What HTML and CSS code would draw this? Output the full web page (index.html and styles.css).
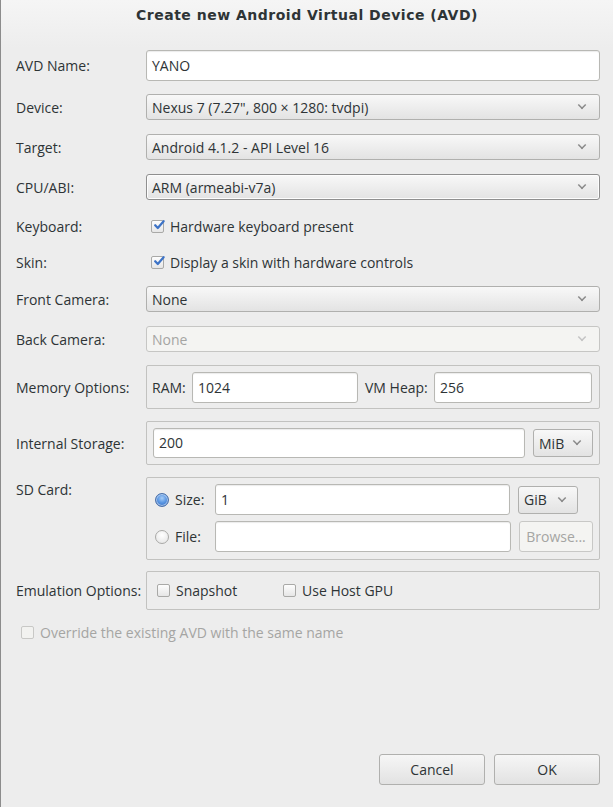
FILE: index.html
```html
<!DOCTYPE html>
<html>
<head>
<meta charset="utf-8">
<link rel="stylesheet" href="styles.css">
</head>
<body>
<div class="dialog">
  <div class="title">Create new Android Virtual Device (AVD)</div>
  <div class="form">
    <div class="row r-name">
      <div class="label">AVD Name:</div>
      <div class="entry grow">YANO</div>
    </div>
    <div class="row r-sel first-sel">
      <div class="label">Device:</div>
      <div class="select grow"><span>Nexus 7 (7.27", 800 × 1280: tvdpi)</span><i class="chev"></i></div>
    </div>
    <div class="row r-sel">
      <div class="label">Target:</div>
      <div class="select grow"><span>Android 4.1.2 - API Level 16</span><i class="chev"></i></div>
    </div>
    <div class="row r-sel">
      <div class="label">CPU/ABI:</div>
      <div class="select grow focus"><span>ARM (armeabi-v7a)</span><i class="chev"></i></div>
    </div>
    <div class="row r-check">
      <div class="label">Keyboard:</div>
      <div class="check-item"><i class="cb checked"><svg viewBox="0 0 12 12" width="12" height="12"><path d="M2.2 6.2 L4.8 9 L10.6 2.2" fill="none" stroke="#3d73c6" stroke-width="2.2" stroke-linecap="round" stroke-linejoin="round"/></svg></i>Hardware keyboard present</div>
    </div>
    <div class="row r-check">
      <div class="label">Skin:</div>
      <div class="check-item"><i class="cb checked"><svg viewBox="0 0 12 12" width="12" height="12"><path d="M2.2 6.2 L4.8 9 L10.6 2.2" fill="none" stroke="#3d73c6" stroke-width="2.2" stroke-linecap="round" stroke-linejoin="round"/></svg></i>Display a skin with hardware controls</div>
    </div>
    <div class="row r-sel front">
      <div class="label">Front Camera:</div>
      <div class="select grow"><span>None</span><i class="chev"></i></div>
    </div>
    <div class="row r-sel">
      <div class="label">Back Camera:</div>
      <div class="select grow disabled"><span>None</span><i class="chev"></i></div>
    </div>
    <div class="row r-mem">
      <div class="label">Memory Options:</div>
      <div class="group grow mem">
        <span class="inlabel ramlabel">RAM:</span>
        <div class="entry ram">1024</div>
        <span class="inlabel vm">VM Heap:</span>
        <div class="entry heap">256</div>
      </div>
    </div>
    <div class="row r-int">
      <div class="label">Internal Storage:</div>
      <div class="group grow int">
        <div class="entry grow">200</div>
        <div class="select unit"><span>MiB</span><i class="chev"></i></div>
      </div>
    </div>
    <div class="row r-sd">
      <div class="label sdlabel">SD Card:</div>
      <div class="group grow sd">
        <div class="sdrow">
          <i class="radio on"></i><span class="rlabel">Size:</span>
          <div class="entry grow">1</div>
          <div class="select gib"><span>GiB</span><i class="chev"></i></div>
        </div>
        <div class="sdrow second">
          <i class="radio"></i><span class="rlabel">File:</span>
          <div class="entry grow"></div>
          <div class="button browse">Browse...</div>
        </div>
      </div>
    </div>
    <div class="row r-emu">
      <div class="label">Emulation Options:</div>
      <div class="group grow emu">
        <div class="check-item snap"><i class="cb"></i>Snapshot</div>
        <div class="check-item"><i class="cb"></i>Use Host GPU</div>
      </div>
    </div>
    <div class="row r-over">
      <div class="check-item over"><i class="cb dis"></i>Override the existing AVD with the same name</div>
    </div>
  </div>
  <div class="actions">
    <div class="button act">Cancel</div>
    <div class="button act">OK</div>
  </div>
</div>
</body>
</html>
```
FILE: styles.css
```css
html, body {
  margin: 0;
  padding: 0;
  height: 100%;
}
body {
  background: #ededed;
  font-family: "Open Sans", "DejaVu Sans", sans-serif;
  font-size: 14px;
  color: #2e3436;
}
.dialog {
  box-sizing: border-box;
  height: 807px;
  border-left: 1px solid #8c8c8c;
  display: flex;
  flex-direction: column;
  background: linear-gradient(#f5f5f5 0, #ededed 48px, #ededed 100%);
}
.title {
  height: 31px;
  line-height: 31px;
  text-align: center;
  font-family: "DejaVu Sans", sans-serif;
  font-weight: bold;
  font-size: 14px;
  letter-spacing: 0.5px;
}
.form {
  display: flex;
  flex-direction: column;
  padding: 0 13px 0 15px;
}
.row {
  display: flex;
  align-items: center;
}
.label {
  width: 130px;
  flex: none;
  white-space: nowrap;
}
.grow {
  flex: 1;
  min-width: 0;
}
.r-name { margin-top: 19px; height: 31px; }
.r-sel { margin-top: 14px; height: 26px; }
.first-sel { margin-top: 13px; }
.r-check { height: 20px; margin-top: 16px; }
.front { margin-top: 14px; }
.r-mem { margin-top: 13px; }
.r-int { margin-top: 12px; }
.r-sd { margin-top: 12px; align-items: flex-start; }
.r-emu { margin-top: 11px; }
.r-over { margin-top: 12px; height: 20px; }

.entry {
  box-sizing: border-box;
  height: 31px;
  background: #fff;
  border: 1px solid #b8b8b4;
  border-radius: 3px;
  box-shadow: inset 0 1px 1px rgba(0,0,0,0.08);
  padding: 0 5px;
  line-height: 29px;
  white-space: nowrap;
}
.select {
  box-sizing: border-box;
  height: 26px;
  display: flex;
  align-items: center;
  justify-content: space-between;
  background: linear-gradient(#f8f8f8, #e3e3e3);
  border: 1px solid #b0b0ae;
  border-radius: 3px;
  padding: 0 13px 0 5px;
  white-space: nowrap;
}
.select.focus {
  border-color: #8f8f8f;
  box-shadow: inset 0 0 0 1px #fdfdfd;
}
.select.disabled {
  background: #f4f4f2;
  color: #a5a5a3;
  border-color: #c6c6c4;
}
.chev {
  width: 6px;
  height: 6px;
  border-right: 2px solid #8a8a8a;
  border-bottom: 2px solid #8a8a8a;
  transform: translateY(-2px) rotate(45deg) scale(0.75);
  flex: none;
}
.select.disabled .chev {
  border-color: #c4c4c4;
}
.check-item {
  display: flex;
  align-items: center;
  white-space: nowrap;
}
.cb {
  box-sizing: border-box;
  width: 13px;
  height: 13px;
  border: 1px solid #a9a9a7;
  border-radius: 2px;
  background: linear-gradient(#fdfdfd, #e6e6e6);
  margin: 0 6px 0 5px;
  position: relative;
  flex: none;
}
.cb svg {
  position: absolute;
  left: 1px;
  top: -2px;
}
.cb.dis {
  border-color: #c8c8c6;
  background: #f2f2f0;
}
.group {
  box-sizing: border-box;
  border: 1px solid #c2c2c0;
  border-radius: 2px;
  display: flex;
  align-items: center;
}
.mem {
  height: 44px;
  padding: 0 7px 0 5px;
}
.inlabel { white-space: nowrap; flex: none; }
.ramlabel { width: 34px; }
.mem .entry.ram { width: 166px; margin-left: 6px; flex: none; }
.mem .inlabel.vm { margin-left: 7px; width: 63px; }
.mem .entry.heap { flex: 1; margin-left: 6px; }
.int {
  height: 44px;
  padding: 0 6px 0 6px;
}
.int .entry { height: 30px; line-height: 28px; }
.select.unit {
  width: 60px;
  height: 28px;
  margin-left: 8px;
  padding: 0 11px 0 5px;
}
.sd {
  height: 83px;
  flex-direction: column;
  align-items: stretch;
  padding: 6px 6px 0 8px;
}
.sdlabel { margin-top: 3px; }
.sdrow {
  display: flex;
  align-items: center;
  height: 31px;
}
.sdrow.second { margin-top: 6px; }
.radio {
  box-sizing: border-box;
  width: 14px;
  height: 14px;
  border-radius: 50%;
  border: 1px solid #a9a9a7;
  background: radial-gradient(circle at 50% 35%, #ffffff, #e2e2e2);
  flex: none;
}
.radio.on {
  border-color: #4a6fa8;
  background: radial-gradient(circle at 50% 35%, #a9cdf5 0, #5b97e3 45%, #2f66bb 100%);
  box-shadow: inset 0 0 0 1px rgba(255,255,255,0.5);
}
.rlabel {
  width: 40px;
  margin-left: 6px;
  flex: none;
}
.select.gib {
  width: 60px;
  height: 28px;
  margin-left: 8px;
  margin-right: 15px;
  padding: 0 11px 0 5px;
}
.button {
  box-sizing: border-box;
  height: 31px;
  display: flex;
  align-items: center;
  justify-content: center;
  border: 1px solid #b0b0ae;
  border-radius: 3px;
  background: linear-gradient(#f6f6f6, #e2e2e2);
  white-space: nowrap;
}
.button.browse {
  width: 74px;
  margin-left: 8px;
  background: #f4f4f2;
  color: #a5a5a3;
  border-color: #c8c8c6;
}
.emu {
  height: 39px;
  padding-left: 5px;
}
.snap { width: 126px; }
.over {
  color: #a5a5a3;
}
.over .cb { margin-left: 5px; }
.actions {
  margin-top: auto;
  margin-bottom: 22px;
  display: flex;
  justify-content: flex-end;
  gap: 9px;
  padding-right: 13px;
}
.button.act {
  width: 106px;
  height: 31px;
}
```
